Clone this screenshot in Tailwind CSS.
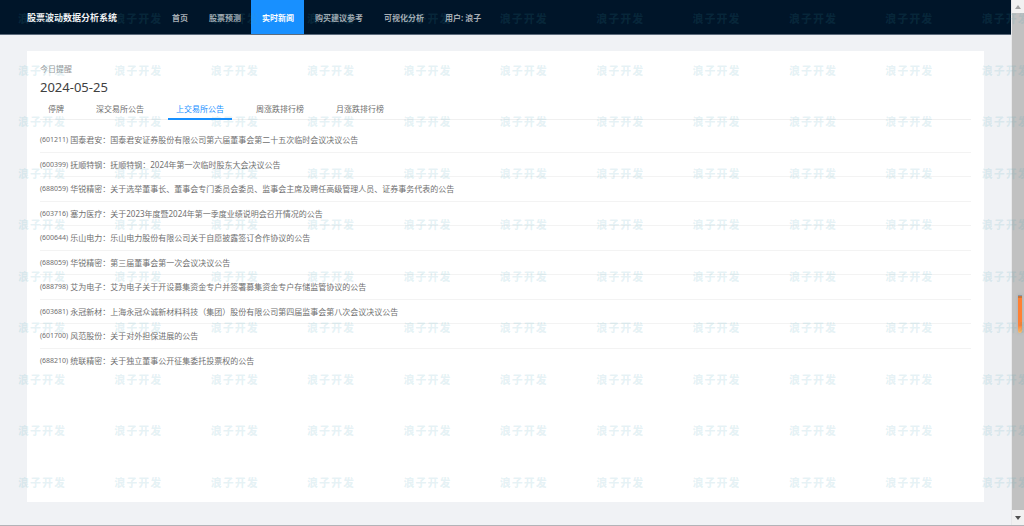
<!DOCTYPE html>
<html lang="zh-CN">
<head>
<meta charset="utf-8">
<title>股票波动数据分析系统</title>
<script src="https://cdn.jsdelivr.net/npm/@tailwindcss/browser@4"></script>
</head>
<body class="relative flex h-screen overflow-hidden border-b border-[#b3b3b8] bg-[#f0f2f5] font-['Noto_Sans','Noto_Sans_CJK_SC',sans-serif] text-[8px] leading-[12px] text-[#707070]">
  <div class="flex min-w-0 flex-1 flex-col">
    <header class="flex h-[35px] shrink-0 items-stretch border-b border-[#5c6b7c] bg-[#001529] pl-[27px]">
      <h1 class="flex w-[134px] items-center pt-px text-[9px] font-bold whitespace-nowrap text-[#f0f2f4]">股票波动数据分析系统</h1>
      <nav class="flex font-bold whitespace-nowrap text-[#a6adb4]">
        <a href="#" class="flex items-center pt-px pr-[10px] pl-[11px]">首页</a>
        <a href="#" class="flex items-center pt-px pr-[10px] pl-[11px]">股票预测</a>
        <a href="#" aria-current="page" class="flex items-center bg-[#1890ff] pt-px pr-[10px] pl-[11px] text-white">实时新闻</a>
        <a href="#" class="flex items-center pt-px pr-[10px] pl-[11px]">购买建议参考</a>
        <a href="#" class="flex items-center pt-px pr-[10px] pl-[11px]">可视化分析</a>
        <a href="#" class="flex items-center pt-px pr-[10px] pl-[11px]">用户: 浪子</a>
      </nav>
    </header>
    <main class="mt-4 mr-[27px] mb-[23px] ml-[27px] flex-1 bg-white px-[13px] pt-3">
      <p class="text-[#999]">今日提醒</p>
      <p class="mt-1 text-[13px] leading-[17px] text-[#404040]">2024-05-25</p>
      <div role="tablist" class="mt-1 flex h-[20px] gap-4 border-b border-[#f0f0f0]">
        <button role="tab" aria-selected="false" class="h-[20px] px-2 pb-0.5">停牌</button>
        <button role="tab" aria-selected="false" class="h-[20px] px-2 pb-0.5">深交易所公告</button>
        <button role="tab" aria-selected="true" class="h-[20px] border-b-2 border-[#1890ff] px-2 text-[#1890ff]">上交易所公告</button>
        <button role="tab" aria-selected="false" class="h-[20px] px-2 pb-0.5">周涨跌排行榜</button>
        <button role="tab" aria-selected="false" class="h-[20px] px-2 pb-0.5">月涨跌排行榜</button>
      </div>
      <ul class="mt-2 grid h-[245px] auto-rows-fr divide-y divide-[#f3f3f3] whitespace-nowrap">
        <li class="flex items-center gap-0.5 pt-px"><span class="text-[7px]">(601211)</span><span>国泰君安：国泰君安证券股份有限公司第六届董事会第二十五次临时会议决议公告</span></li>
        <li class="flex items-center gap-0.5 pt-px"><span class="text-[7px]">(600399)</span><span>抚顺特钢：抚顺特钢：2024年第一次临时股东大会决议公告</span></li>
        <li class="flex items-center gap-0.5 pt-px"><span class="text-[7px]">(688059)</span><span>华锐精密：关于选举董事长、董事会专门委员会委员、监事会主席及聘任高级管理人员、证券事务代表的公告</span></li>
        <li class="flex items-center gap-0.5 pt-px"><span class="text-[7px]">(603716)</span><span>塞力医疗：关于2023年度暨2024年第一季度业绩说明会召开情况的公告</span></li>
        <li class="flex items-center gap-0.5 pt-px"><span class="text-[7px]">(600644)</span><span>乐山电力：乐山电力股份有限公司关于自愿披露签订合作协议的公告</span></li>
        <li class="flex items-center gap-0.5 pt-px"><span class="text-[7px]">(688059)</span><span>华锐精密：第三届董事会第一次会议决议公告</span></li>
        <li class="flex items-center gap-0.5 pt-px"><span class="text-[7px]">(688798)</span><span>艾为电子：艾为电子关于开设募集资金专户并签署募集资金专户存储监管协议的公告</span></li>
        <li class="flex items-center gap-0.5 pt-px"><span class="text-[7px]">(603681)</span><span>永冠新材：上海永冠众诚新材料科技（集团）股份有限公司第四届监事会第八次会议决议公告</span></li>
        <li class="flex items-center gap-0.5 pt-px"><span class="text-[7px]">(601700)</span><span>风范股份：关于对外担保进展的公告</span></li>
        <li class="flex items-center gap-0.5 pt-px"><span class="text-[7px]">(688210)</span><span>统联精密：关于独立董事公开征集委托投票权的公告</span></li>
      </ul>
    </main>
  </div>

  <!-- Scroll bar -->
  <div class="flex w-[13px] shrink-0 flex-col border-l border-[#e8e8ea] bg-[#f1f1f1]" aria-hidden="true">
    <div class="flex h-[13px] items-center justify-center"><svg class="h-[4px] w-[6px]" viewBox="0 0 6 4"><path d="M0 4 3 0 6 4Z" fill="#a3a3a3"/></svg></div>
    <div class="flex flex-1 items-center justify-end bg-[#c1c1c1] pt-[104px]">
      <div class="mr-[2px] flex h-[38px] w-[4px] flex-col overflow-hidden rounded-b-sm bg-linear-to-b from-[#ff8033] from-80% to-[#ffc069] shadow-[0_0_3px_#aaa]"><span class="h-[1px] bg-[#8a99a8]"></span><span class="h-[2px] bg-[#c8743c]"></span></div>
    </div>
    <div class="flex h-[15px] items-center justify-center"><svg class="h-[4px] w-[6px]" viewBox="0 0 6 4"><path d="M0 0 3 4 6 0Z" fill="#505050"/></svg></div>
  </div>

  <!-- Watermark laid over the whole page -->
  <div id="watermark" aria-hidden="true" class="pointer-events-none absolute inset-0 overflow-hidden pt-[11px] pl-[18px]">
    <div class="grid h-[515px] w-[1060px] grid-cols-11 grid-rows-10 text-[11px] leading-[16px] font-black text-[#3a9db0]/13"></div>
  </div>
  <script>
    const grid = document.querySelector('#watermark > div');
    for (let i = 0; i < 110; i++) {
      const mark = document.createElement('div');
      mark.className = 'flex gap-px';
      for (const ch of '浪子开发') {
        const s = document.createElement('span');
        s.textContent = ch;
        mark.append(s);
      }
      grid.append(mark);
    }
  </script>
</body>
</html>
